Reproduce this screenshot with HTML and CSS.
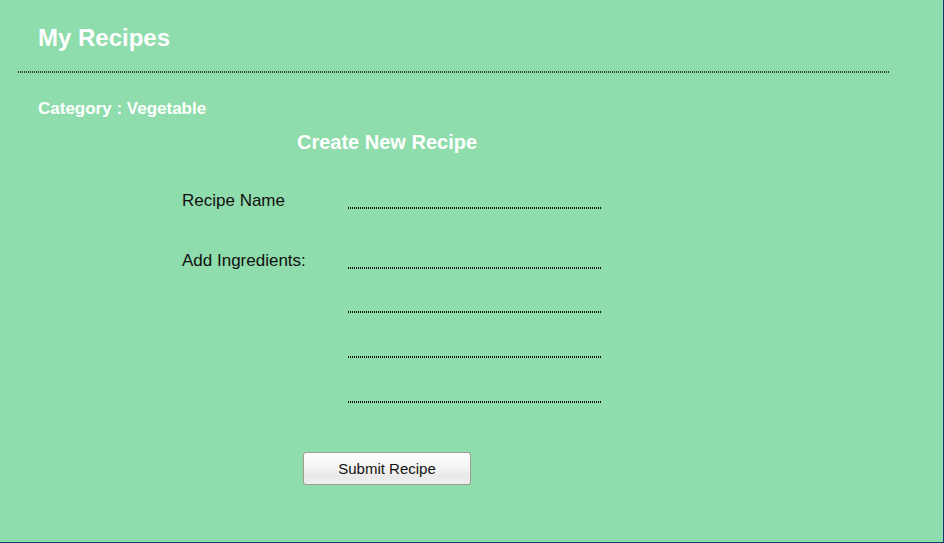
FILE: index.html
```html
<!DOCTYPE html>
<html lang="en">
<head>
<meta charset="utf-8">
<title>My Recipes</title>
<link rel="stylesheet" href="styles.css">
</head>
<body>
<div class="page">
  <h1 class="title">My Recipes</h1>
  <div class="rule"></div>
  <div class="category">Category : Vegetable</div>
  <form class="form">
    <h2 class="form-title">Create New Recipe</h2>
    <div class="row">
      <label class="label" for="name">Recipe Name</label>
      <input class="field" id="name" type="text">
    </div>
    <div class="row row-ing">
      <label class="label" for="ing1">Add Ingredients:</label>
      <input class="field" id="ing1" type="text">
    </div>
    <div class="row row-extra first">
      <span class="label"></span>
      <input class="field" type="text">
    </div>
    <div class="row row-extra">
      <span class="label"></span>
      <input class="field" type="text">
    </div>
    <div class="row row-extra">
      <span class="label"></span>
      <input class="field" type="text">
    </div>
    <div class="actions">
      <button class="submit" type="button">Submit Recipe</button>
    </div>
  </form>
</div>
</body>
</html>
```

FILE: styles.css
```css
html, body {
  margin: 0;
  padding: 0;
}

body {
  font-family: "Liberation Sans", Arial, sans-serif;
  background: #8fdcac;
}

.page {
  width: 944px;
  height: 543px;
  box-sizing: border-box;
  background: #8fdcac;
  border-right: 1px solid #17386e;
  border-bottom: 1px solid #17386e;
  padding-top: 24px;
}

.title {
  margin: 0 0 0 38px;
  font-size: 24px;
  line-height: 28px;
  font-weight: bold;
  color: #ffffff;
}

.rule {
  height: 2px;
  margin: 19px 53px 0 18px;
  background: linear-gradient(90deg, #3a3a3a 50%, transparent 50%) left top / 2px 2px repeat-x;
}

.category {
  margin-top: 26px;
  padding-left: 38px;
  font-size: 17px;
  line-height: 20px;
  font-weight: bold;
  color: #ffffff;
}

.form {
  margin: 11px 0 0 182px;
  width: 410px;
}

.form-title {
  margin: 0 0 37px 0;
  font-size: 20px;
  line-height: 24px;
  font-weight: bold;
  color: #ffffff;
  text-align: center;
}

.row {
  display: flex;
  align-items: flex-start;
  height: 20px;
}

.row-ing {
  margin-top: 40px;
}

.row-extra {
  margin-top: 25px;
}

.row-extra.first {
  margin-top: 24px;
}

.label {
  flex: 0 0 166px;
  font-size: 17px;
  line-height: 20px;
  color: #111111;
}

.field {
  flex: 0 0 253px;
  width: 253px;
  height: 18px;
  box-sizing: border-box;
  margin: 0;
  padding: 0;
  border: none;
  outline: none;
  font-family: inherit;
  font-size: 15px;
  background: linear-gradient(90deg, #111111 50%, transparent 50%) left bottom / 2px 2px repeat-x;
}

.actions {
  margin-top: 47px;
  text-align: center;
}

.submit {
  width: 168px;
  height: 33px;
  box-sizing: border-box;
  border: 1px solid #a39a90;
  border-radius: 3px;
  background: linear-gradient(#fdfdfd, #f5f5f5 45%, #e9e9e9 75%, #f0f0f0);
  font-family: "Liberation Sans", Arial, sans-serif;
  font-size: 15px;
  color: #111111;
  padding: 0;
}
```
